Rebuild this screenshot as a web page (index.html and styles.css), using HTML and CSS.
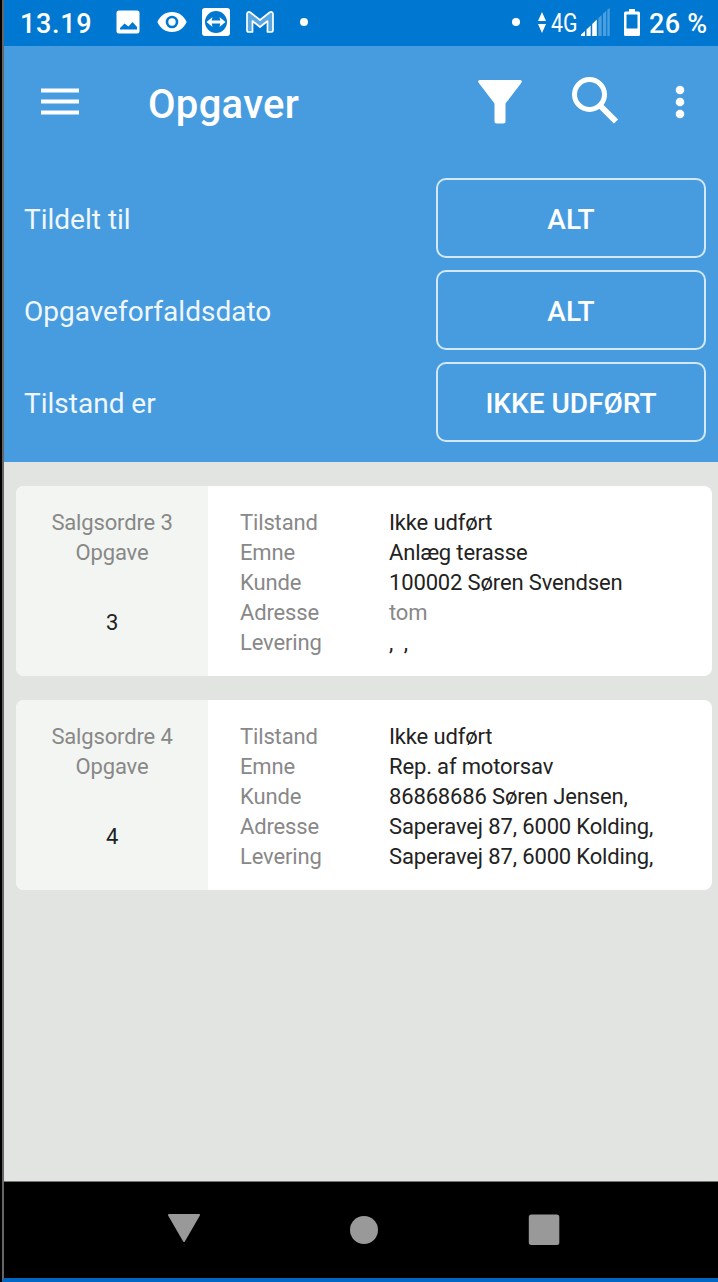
FILE: index.html
```
<!DOCTYPE html>
<html lang="da">
	<head>
		<meta charset="utf-8"/>
		<title>Opgaver</title>
		<link rel="stylesheet" href="styles.css">
	</head>
	<body>
		<div class="phone">
			<div class="status">
				<span class="time">13.19</span>
				<svg class="ic-image" width="24" height="24" viewBox="0 0 24 24"><path fill="#fff" fill-rule="evenodd" d="M3 .5h18a2.500 2.500 0 0 1 2.500 2.500v18a2.500 2.500 0 0 1-2.500 2.500H3A2.500 2.500 0 0 1 .5 21V3A2.500 2.500 0 0 1 3 .5zM4 19.500h17v-2.500l-4.500-5-4 4.500-4-3L4 18z"/></svg>
				<svg class="ic-eye" width="30" height="20" viewBox="0 0 30 20"><path fill="#fff" fill-rule="evenodd" d="M15 0C8 0 3 4 .4 10 3 16 8 20 15 20s12-4 14.600-10C27 4 22 0 15 0zm0 16.300a6.300 6.300 0 1 1 0-12.600 6.300 6.300 0 0 1 0 12.600z"/><circle cx="15" cy="10" r="3.700" fill="#fff"/></svg>
				<svg class="ic-remote" width="28" height="28" viewBox="0 0 28 28"><rect width="28" height="28" rx="3" fill="#fff"/><circle cx="14" cy="14" r="11" fill="#0078d1"/><path fill="#fff" d="M4.500 14l6-5-.8 3.500h8.600l-.8-3.500 6 5-6 5 .8-3.500H9.700l.8 3.500z"/></svg>
				<svg class="ic-mail" width="28" height="22" viewBox="0 0 28 22"><path fill="#5ba7e2" stroke="#fff" stroke-width="1.700" stroke-linejoin="round" d="M1 3C1 .8 3 .4 4.500 1.500L14 9l9.500-7.500C25 .4 27 .8 27 3v16.500c0 1-.6 1.500-1.500 1.500H21.500V10L14 16 6.500 10v11h-4C1.600 21 1 20.500 1 19.500z"/></svg>
				<span class="dot"></span>
				<span class="spacer"></span>
				<span class="dot"></span>
				<svg class="ic-data" width="8" height="21" viewBox="0 0 8 21"><path fill="#fff" d="M4 0l4 9H0zM0 12h8l-4 9z"/></svg>
				<span class="net">4G</span>
				<svg class="ic-signal" width="30" height="28" viewBox="0 0 30 28"><path fill="#fff" d="M0 28v-1.500L4 23v5zM5.500 28v-6.500L9.700 17.500V28zM11.200 28V16l4.600-4.500V28z"/><path fill="#4c9fdf" d="M17.300 28V10.200l3.400-3.300V28zM22 28V5.800l3.200-3.100V28zM26.300 28V1.700L28.700 0v28z"/></svg>
				<svg class="ic-battery" width="16" height="27" viewBox="0 0 16 27"><path fill="#fff" fill-rule="evenodd" d="M5 0h6v2.500h3.500A1.500 1.500 0 0 1 16 4v21.500a1.500 1.500 0 0 1-1.500 1.500h-13A1.500 1.500 0 0 1 0 25.500V4a1.500 1.500 0 0 1 1.500-1.500H5zM2.500 5.500v14h11v-14z"/></svg>
				<span class="percent">26 %</span>
			</div>

			<div class="header">
				<div class="toolbar">
					<svg class="menu" width="38" height="28" viewBox="0 0 38 28"><path stroke="#fff" stroke-width="4" d="M0 2.500h38M0 13.500h38M0 24.500h38"/></svg>
					<h1 class="title">Opgaver</h1>
					<svg class="filter" width="44" height="44" viewBox="0 0 44 44"><path fill="#fff" d="M2 0h40c1.600 0 2.400 1.500 1.400 2.800L27.500 23.500V41c0 1.800-.7 2.500-2.500 2.500h-6c-1.800 0-2.500-.7-2.500-2.500V23.500L.6 2.800C-.4 1.500.4 0 2 0z"/></svg>
					<svg class="search" width="47" height="47" viewBox="0 0 47 47"><circle cx="17.500" cy="17.500" r="15" fill="none" stroke="#fff" stroke-width="5"/><path stroke="#fff" stroke-width="6" d="M29 29.500l15 15"/></svg>
					<svg class="more" width="10" height="34" viewBox="0 0 10 34"><g fill="#fff"><circle cx="5" cy="5" r="4.300"/><circle cx="5" cy="17" r="4.300"/><circle cx="5" cy="29" r="4.300"/></g></svg>
				</div>
				<div class="filters">
					<div class="row"><span>Tildelt til</span><button class="btn">ALT</button></div>
					<div class="row"><span>Opgaveforfaldsdato</span><button class="btn">ALT</button></div>
					<div class="row"><span>Tilstand er</span><button class="btn">IKKE UDFØRT</button></div>
				</div>
			</div>

			<div class="list">
				<div class="card">
					<div class="side">
						<div>Salgsordre 3</div>
						<div>Opgave</div>
						<div class="number">3</div>
					</div>
					<div class="info">
						<span class="label">Tilstand</span><span>Ikke udført</span>
						<span class="label">Emne</span><span>Anlæg terasse</span>
						<span class="label">Kunde</span><span>100002 Søren Svendsen</span>
						<span class="label">Adresse</span><span class="empty">tom</span>
						<span class="label">Levering</span><span>,&nbsp; ,</span>
					</div>
				</div>
				<div class="card">
					<div class="side">
						<div>Salgsordre 4</div>
						<div>Opgave</div>
						<div class="number">4</div>
					</div>
					<div class="info">
						<span class="label">Tilstand</span><span>Ikke udført</span>
						<span class="label">Emne</span><span>Rep. af motorsav</span>
						<span class="label">Kunde</span><span>86868686 Søren Jensen,</span>
						<span class="label">Adresse</span><span>Saperavej 87, 6000 Kolding,</span>
						<span class="label">Levering</span><span>Saperavej 87, 6000 Kolding,</span>
					</div>
				</div>
			</div>

			<div class="nav">
				<svg width="32" height="32" viewBox="0 0 32 32"><path fill="#999" stroke="#999" stroke-width="2" stroke-linejoin="round" d="M1 2h30L16 28z"/></svg>
				<svg width="32" height="32" viewBox="0 0 32 32"><circle cx="16" cy="17" r="14" fill="#999"/></svg>
				<svg width="32" height="32" viewBox="0 0 32 32"><rect x=".8" y="1.500" width="30.500" height="30.500" rx="2.500" fill="#999"/></svg>
			</div>
		</div>
	</body>
</html>
```
FILE: styles.css
```
* {
	box-sizing : border-box;
}

html, body {
	height : 100%;
	margin : 0;
}

body {
	background  : #000;
	font-family : Roboto, sans-serif;
	overflow    : hidden;
}

svg {
	display     : block;
	flex-shrink : 0;
}

.phone {
	display        : flex;
	flex-direction : column;
	height         : 1282px;
	margin-left    : 2px;
	border-left    : 2px solid #666;
	border-bottom  : 4px solid #0067c5;
}

/* status bar */
.status {
	display     : flex;
	align-items : center;
	height      : 46px;
	padding     : 0 10px 2px 16px;
	background  : #0078d1;
	color       : #fff;
	white-space : nowrap;
}

.time {
	width          : 96px;
	font-size      : 27px;
	font-weight    : 500;
	letter-spacing : .7px;
	padding-top    : 4px;
}

.ic-eye {
	margin-left : 17px;
}

.ic-remote {
	margin-left : 15px;
}

.ic-mail {
	margin-left : 16px;
}

.dot {
	width         : 8px;
	height        : 8px;
	margin-left   : 26px;
	border-radius : 50%;
	background    : #fff;
}

.spacer {
	flex : 1;
}

.ic-data {
	margin-left : 18px;
}

.net {
	width       : 30px;
	margin-left : 5px;
	padding-top : 2px;
	font-size   : 26px;
	transform   : scaleX(.82);
	transform-origin : left;
}

.ic-battery {
	margin-left : 13px;
}

.percent {
	width       : 59px;
	margin-left : 9px;
	padding-top : 4px;
	font-size   : 27px;
	font-weight : 500;
	letter-spacing : .3px;
}

/* header */
.header {
	height     : 416px;
	background : #479ce0;
	color      : #fff;
}

.toolbar {
	display     : flex;
	align-items : center;
	height      : 112px;
	padding     : 0 33px 0 37px;
}

.title {
	flex           : 1;
	margin         : 5px 0 0 69px;
	font-size      : 40px;
	font-weight    : 500;
	letter-spacing : .3px;
}

.search {
	margin : 0 0 3px 50px;
}

.more {
	margin-left : 56px;
}

.filters {
	display        : flex;
	flex-direction : column;
	gap            : 12px;
	padding        : 20px 12px 0 20px;
}

.row {
	display         : flex;
	justify-content : space-between;
	align-items     : center;
	font-size       : 28px;
}

.row span {
	padding-top : 3px;
	opacity     : .92;
}

.btn {
	width         : 270px;
	height        : 80px;
	padding       : 3px 0 0;
	border        : 2px solid #d4e8f9;
	border-radius : 10px;
	background    : none;
	color         : #fff;
	font          : 500 28px Roboto, sans-serif;
}

/* task list */
.list {
	display        : flex;
	flex-direction : column;
	flex           : 1;
	gap            : 24px;
	padding        : 24px 6px 0 12px;
	background     : #e2e4e1;
	border-bottom  : 1px solid #777;
}

.card {
	display        : flex;
	height         : 190px;
	border-radius  : 8px;
	background     : #fff;
	overflow       : hidden;
	font-size      : 22px;
	line-height    : 30px;
	letter-spacing : -.15px;
}

.side {
	width       : 192px;
	padding-top : 22px;
	background  : #f3f5f2;
	color       : #888;
	text-align  : center;
}

.number {
	margin-top : 40px;
	color      : #222;
}

.info {
	display       : grid;
	grid-template-columns : 149px 1fr;
	align-content : start;
	padding       : 22px 0 0 32px;
	color         : #222;
}

.label, .empty {
	color : #888;
}

/* android buttons */
.nav {
	display         : flex;
	justify-content : center;
	gap             : 148px;
	height          : 96px;
	padding-top     : 31px;
	padding-left    : 6px;
	background      : #000;
}
```
